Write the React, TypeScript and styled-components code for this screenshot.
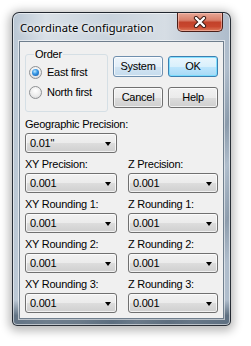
import React from "react";
import styled, { createGlobalStyle } from "styled-components";

const Global = createGlobalStyle`
  html, body { margin: 0; padding: 0; background: #ffffff; }
  body { width: 251px; height: 346px; overflow: hidden; }
`;

const Page = styled.div`
  padding: 12px 0 0 12px;
`;

const Window = styled.div`
  position: relative;
  width: 219px;
  height: 314px;
  box-sizing: border-box;
  border: 1px solid rgba(25, 30, 38, 0.9);
  border-radius: 7px 7px 5px 5px;
  padding: 0 6px 6px 6px;
  display: flex;
  flex-direction: column;
  background:
    linear-gradient(120deg, transparent 62%, rgba(70, 90, 110, 0.35) 70%, transparent 76%, rgba(60, 80, 100, 0.3) 84%, transparent 90%),
    linear-gradient(180deg, rgba(255,255,255,0) 92%, rgba(40, 60, 80, 0.6) 97%),
    linear-gradient(90deg, #b9c6d3 0%, #d9e0e7 15%, #c9d3dd 45%, #d6dde4 70%, #aebccb 100%);
  box-shadow:
    0 2px 10px 3px rgba(0, 0, 0, 0.28),
    inset 0 0 0 1px rgba(255, 255, 255, 0.55);
`;

const TitleBar = styled.div`
  flex: none;
  height: 28px;
  display: flex;
  align-items: flex-start;
`;

const Title = styled.div`
  flex: 1;
  padding-left: 1px;
  margin-top: 7px;
  font-family: "Noto Sans", "Open Sans", sans-serif;
  font-size: 11.2px;
  line-height: 15px;
  color: #000;
  text-shadow: 0 0 6px #fff, 0 0 3px #fff;
  white-space: nowrap;
`;

const CloseButton = styled.div`
  width: 46px;
  height: 19px;
  margin-right: 1px;
  box-sizing: border-box;
  border: 1px solid #4a1f19;
  border-top: none;
  border-radius: 0 0 5px 5px;
  background: linear-gradient(180deg, #e7a796 0%, #d9806b 40%, #c2422a 52%, #c8472e 75%, #dd7a5a 100%);
  box-shadow: inset 0 0 0 1px rgba(255, 210, 200, 0.5);
  display: flex;
  align-items: center;
  justify-content: center;
`;

const Client = styled.div`
  flex: 1;
  min-height: 0;
  overflow: hidden;
  box-sizing: border-box;
  border: 1px solid #6f7e8d;
  background: #f0f0f0;
  box-shadow: 0 0 0 1px rgba(255, 255, 255, 0.55);
  padding: 6px 5px 5px 5px;
  display: flex;
  flex-direction: column;
  font-family: "Liberation Sans", Arial, sans-serif;
  font-size: 11px;
  letter-spacing: -0.25px;
  color: #000;
`;

const TopRow = styled.div`
  display: flex;
  gap: 5px;
  margin-bottom: 5px;
`;

const Group = styled.fieldset`
  margin: 0;
  width: 83px;
  height: 64px;
  box-sizing: border-box;
  border: 1px solid #d5dfe5;
  border-radius: 3px;
  padding: 1px 4px 0 3px;
  display: flex;
  flex-direction: column;
`;

const Legend = styled.legend`
  padding: 0 1px;
  margin-left: 5px;
  line-height: 13px;
`;

const RadioRow = styled.label`
  height: 20px;
  display: flex;
  align-items: center;
  gap: 5px;
  white-space: nowrap;
`;

const RadioCircle = styled.span<{ $checked?: boolean }>`
  width: 13px;
  height: 13px;
  box-sizing: border-box;
  border-radius: 50%;
  border: 1px solid #8e9093;
  background: radial-gradient(circle at 50% 35%, #ffffff 0%, #ececec 55%, #cfd1d3 100%);
  display: flex;
  align-items: center;
  justify-content: center;
  flex: none;
  &::after {
    content: "";
    width: 7px;
    height: 7px;
    border-radius: 50%;
    background: radial-gradient(circle at 40% 35%, #bfe8ff 0%, #3a9ae6 40%, #0d4c9e 100%);
    display: ${(p) => (p.$checked ? "block" : "none")};
  }
`;

const ButtonGrid = styled.div`
  margin-top: 8px;
  display: grid;
  grid-template-columns: 50px 50px;
  grid-auto-rows: 21px;
  column-gap: 5px;
  row-gap: 10px;
  align-content: start;
`;

const Button = styled.div<{ $variant?: "hover" | "default" }>`
  box-sizing: border-box;
  border-radius: 3px;
  border: 1px solid
    ${(p) => (p.$variant === "default" ? "#3c7fb1" : p.$variant === "hover" ? "#6f8fae" : "#707070")};
  background: ${(p) =>
    p.$variant === "default"
      ? "linear-gradient(180deg, #eaf6fd 0%, #d9f0fc 50%, #bee6fd 51%, #a7d9f5 100%)"
      : p.$variant === "hover"
      ? "linear-gradient(180deg, #eef5fb 0%, #e2eef8 50%, #d2e4f2 51%, #c6dcee 100%)"
      : "linear-gradient(180deg, #f2f2f2 0%, #ebebeb 50%, #dddddd 51%, #cfcfcf 100%)"};
  box-shadow: inset 0 0 0 1px
    ${(p) => (p.$variant === "default" ? "rgba(110, 220, 255, 0.8)" : "rgba(255, 255, 255, 0.7)")};
  display: flex;
  align-items: center;
  justify-content: center;
  line-height: 13px;
`;

const Field = styled.div<{ $gapBelow?: boolean }>`
  display: flex;
  flex-direction: column;
  margin-bottom: ${(p) => (p.$gapBelow ? "4px" : "0")};
`;

const FieldLabel = styled.div`
  line-height: 14px;
  margin-bottom: 2px;
  white-space: nowrap;
`;

const Combo = styled.div<{ $width?: number }>`
  width: ${(p) => (p.$width ? `${p.$width}px` : "auto")};
  height: 20px;
  box-sizing: border-box;
  border: 1px solid #707070;
  border-radius: 3px;
  background: linear-gradient(180deg, #f2f2f2 0%, #ebebeb 50%, #dddddd 51%, #cfcfcf 100%);
  box-shadow: inset 0 0 0 1px rgba(255, 255, 255, 0.7);
  display: flex;
  align-items: center;
  padding: 0 5px 0 4px;
  font-size: 11px;
`;

const ComboText = styled.span`
  flex: 1;
`;

const Arrow = styled.span`
  width: 0;
  height: 0;
  border-left: 3.5px solid transparent;
  border-right: 3.5px solid transparent;
  border-top: 4px solid #000;
  margin-top: 1px;
`;

const Columns = styled.div`
  display: grid;
  grid-template-columns: 92px 1fr;
  column-gap: 11px;
  row-gap: 4px;
`;

const CloseIcon = () => (
  <svg width="14" height="12" viewBox="0 0 14 12">
    <path d="M3 2 L11 10 M11 2 L3 10" stroke="#3b1a14" strokeWidth="4.2" strokeLinecap="round" />
    <path d="M3 2 L11 10 M11 2 L3 10" stroke="#ffffff" strokeWidth="2.4" strokeLinecap="round" />
  </svg>
);

const Select = ({ value, width }: { value: string; width?: number }) => (
  <Combo $width={width}>
    <ComboText>{value}</ComboText>
    <Arrow />
  </Combo>
);

const rows = [
  ["XY Precision:", "Z Precision:"],
  ["XY Rounding 1:", "Z Rounding 1:"],
  ["XY Rounding 2:", "Z Rounding 2:"],
  ["XY Rounding 3:", "Z Rounding 3:"],
];

export default function App() {
  return (
    <>
      <Global />
      <Page>
        <Window>
          <TitleBar>
            <Title>Coordinate Configuration</Title>
            <CloseButton>
              <CloseIcon />
            </CloseButton>
          </TitleBar>
          <Client>
            <TopRow>
              <Group>
                <Legend>Order</Legend>
                <RadioRow>
                  <RadioCircle $checked />
                  East first
                </RadioRow>
                <RadioRow>
                  <RadioCircle />
                  North first
                </RadioRow>
              </Group>
              <ButtonGrid>
                <Button $variant="hover">System</Button>
                <Button $variant="default">OK</Button>
                <Button>Cancel</Button>
                <Button>Help</Button>
              </ButtonGrid>
            </TopRow>
            <Field $gapBelow>
              <FieldLabel>Geographic Precision:</FieldLabel>
              <Select value={'0.01"'} width={92} />
            </Field>
            <Columns>
              {rows.map(([l, r]) => (
                <React.Fragment key={l}>
                  <Field>
                    <FieldLabel>{l}</FieldLabel>
                    <Select value="0.001" />
                  </Field>
                  <Field>
                    <FieldLabel>{r}</FieldLabel>
                    <Select value="0.001" />
                  </Field>
                </React.Fragment>
              ))}
            </Columns>
          </Client>
        </Window>
      </Page>
    </>
  );
}
